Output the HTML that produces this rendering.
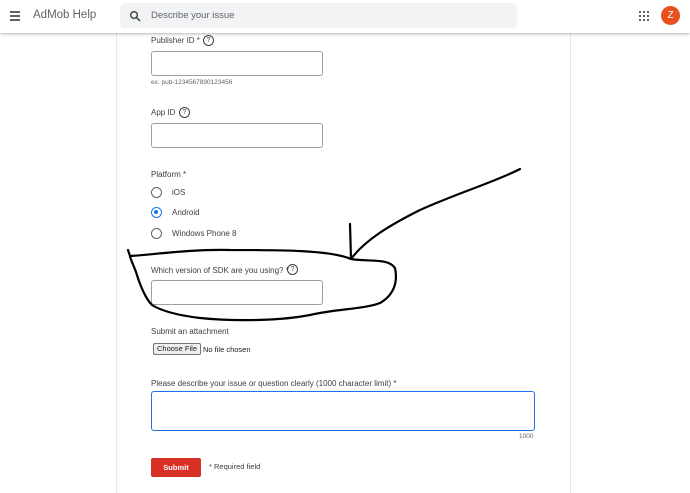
<!DOCTYPE html>
<html><head><meta charset="utf-8"><style>
*{box-sizing:border-box;margin:0;padding:0}
body{width:690px;height:478px;overflow:hidden;background:#fff;font-family:"Liberation Sans",Arial,sans-serif;color:#202124;position:relative}
.a{position:absolute}
.hdr{left:0;top:0;width:690px;height:33px;background:#fff;box-shadow:0 1px 3px rgba(0,0,0,.3);z-index:2}
.card{left:116px;top:33px;width:455px;height:460px;border-left:1px solid #e6e6e6;border-right:1px solid #e6e6e6}
.lbl{font-size:8px;color:#3c4043}
.inp{border:1px solid #9aa0a6;border-radius:3px;background:#fff}
.q{width:11px;height:11px;border:1px solid #3c4043;border-radius:50%;font-size:7px;text-align:center;line-height:9px;color:#3c4043}
.rad{width:11px;height:11px;border:1.5px solid #5f6368;border-radius:50%}
</style></head><body>
<div class="a hdr">
  <div class="a" style="left:10px;top:11px;width:10px;height:1.5px;background:#5f6368;box-shadow:0 4px 0 #5f6368,0 8px 0 #5f6368"></div>
  <div class="a" style="left:33px;top:9px;font-size:11.5px;color:#5f6368">AdMob Help</div>
  <div class="a" style="left:120px;top:3px;width:397px;height:25px;background:#f1f3f4;border-radius:5px"></div>
  <svg class="a" style="left:129px;top:10px" width="12" height="12" viewBox="0 0 12 12"><circle cx="5" cy="5" r="3.3" fill="none" stroke="#3c4043" stroke-width="1.4"/><path d="M7.4 7.4L11 11" stroke="#3c4043" stroke-width="1.5"/></svg>
  <div class="a" style="left:151px;top:10px;font-size:9.5px;color:#5f6368">Describe your issue</div>
  <svg class="a" style="left:639px;top:11px" width="10" height="10" viewBox="0 0 10 10" fill="#5f6368"><rect x="0" y="0" width="2" height="2"/><rect x="4" y="0" width="2" height="2"/><rect x="8" y="0" width="2" height="2"/><rect x="0" y="4" width="2" height="2"/><rect x="4" y="4" width="2" height="2"/><rect x="8" y="4" width="2" height="2"/><rect x="0" y="8" width="2" height="2"/><rect x="4" y="8" width="2" height="2"/><rect x="8" y="8" width="2" height="2"/></svg>
  <div class="a" style="left:661px;top:6px;width:19px;height:19px;border-radius:50%;background:#e8501e;color:#fff;font-size:10px;text-align:center;line-height:19px">Z</div>
</div>
<div class="a card"></div>

<div class="a lbl" style="left:151px;top:36px">Publisher ID *</div>
<div class="a q" style="left:203px;top:35px">?</div>
<div class="a inp" style="left:151px;top:51px;width:172px;height:25px"></div>
<div class="a" style="left:151px;top:79px;font-size:6.5px;color:#5f6368">ex. pub-1234567890123456</div>

<div class="a lbl" style="left:151px;top:108px">App ID</div>
<div class="a q" style="left:179px;top:107px">?</div>
<div class="a inp" style="left:151px;top:123px;width:172px;height:25px"></div>

<div class="a lbl" style="left:151px;top:170px">Platform *</div>
<div class="a rad" style="left:151px;top:187px"></div>
<div class="a lbl" style="left:172px;top:188px">iOS</div>
<div class="a rad" style="left:151px;top:207px;border-color:#1a73e8"><div class="a" style="left:2px;top:2px;width:4px;height:4px;border-radius:50%;background:#1a73e8"></div></div>
<div class="a lbl" style="left:172px;top:208px">Android</div>
<div class="a rad" style="left:151px;top:228px"></div>
<div class="a lbl" style="left:172px;top:229px">Windows Phone 8</div>

<div class="a lbl" style="left:151px;top:266px">Which version of SDK are you using? *</div>
<div class="a q" style="left:287px;top:264px">?</div>
<div class="a inp" style="left:151px;top:280px;width:172px;height:25px"></div>

<div class="a lbl" style="left:151px;top:327px">Submit an attachment</div>
<div class="a" style="left:153px;top:343px;width:48px;height:12px;background:#efefef;border:1px solid #767676;border-radius:2px;font-size:7.5px;text-align:center;line-height:10px">Choose File</div>
<div class="a" style="left:203px;top:345px;font-size:7.5px">No file chosen</div>

<div class="a lbl" style="left:151px;top:379px">Please describe your issue or question clearly (1000 character limit) *</div>
<div class="a" style="left:151px;top:391px;width:384px;height:40px;border:1.5px solid #1a73e8;border-radius:3px"></div>
<div class="a" style="left:519px;top:433px;font-size:6.5px;color:#5f6368">1000</div>
<div class="a" style="left:151px;top:458px;width:50px;height:19px;background:#d93025;border-radius:2px;color:#fff;font-size:7.5px;font-weight:bold;text-align:center;line-height:19px">Submit</div>
<div class="a" style="left:209px;top:462px;font-size:7.5px;color:#3c4043">* Required field</div>

<svg class="a" style="left:0;top:0" width="690" height="478" viewBox="0 0 690 478">
<g fill="none" stroke="#000" stroke-width="2.2" stroke-linecap="round" stroke-linejoin="round">
<path d="M128 250 L130 256 C150 255 190 249 230 250 C280 250 330 250 351 259 C370 262 388 258 395 268 C398 282 394 295 380 303 C365 309 335 309 310 315 C285 320 240 322 200 318 C175 315 160 310 152 305 C145 298 140 285 136 272 C133 264 130 258 130 256"/>
<path d="M350 224 L351 259 C365 240 390 225 420 210 C460 192 495 182 520 169"/>
</g></svg>
</body></html>
